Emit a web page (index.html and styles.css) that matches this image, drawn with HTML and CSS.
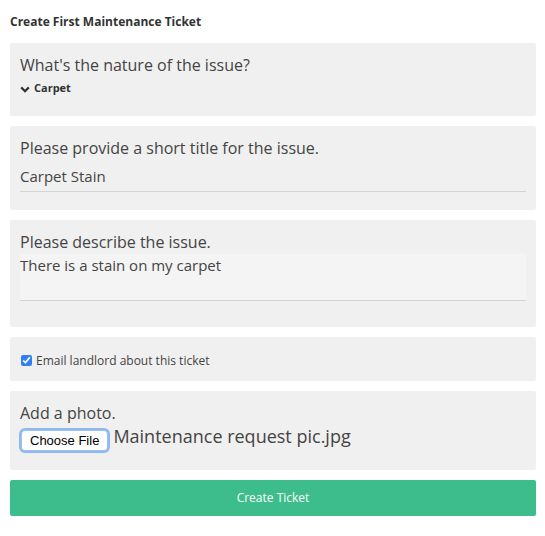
FILE: index.html
```
<!DOCTYPE html>
<html>
<head>
<meta charset="utf-8">
<link rel="stylesheet" href="styles.css">
</head>
<body>
<div class="page">
  <h1 class="heading">Create First Maintenance Ticket</h1>
  <div class="card card-nature">
    <div class="label">What's the nature of the issue?</div>
    <div class="select">
      <svg class="chev" width="10" height="7" viewBox="0 0 10 7"><path d="M1.2 1.4 L5 5.2 L8.8 1.4" fill="none" stroke="#333" stroke-width="2.2"/></svg>
      <span>Carpet</span>
    </div>
  </div>
  <div class="card card-title">
    <div class="label">Please provide a short title for the issue.</div>
    <div class="input">Carpet Stain</div>
  </div>
  <div class="card card-desc">
    <div class="label">Please describe the issue.</div>
    <div class="textarea">There is a stain on my carpet</div>
  </div>
  <div class="card card-check">
    <label class="check"><input type="checkbox" checked><span>Email landlord about this ticket</span></label>
  </div>
  <div class="card card-photo">
    <div class="label">Add a photo.</div>
    <div class="file">
      <span class="file-btn">Choose File</span>
      <span class="file-name">Maintenance request pic.jpg</span>
    </div>
  </div>
  <div class="submit">Create Ticket</div>
</div>
</body>
</html>
```
FILE: styles.css
```
html, body {
  margin: 0;
  padding: 0;
  background: #fff;
}
body {
  font-family: "Open Sans", "Liberation Sans", sans-serif;
  color: #444;
}
.page {
  width: 526px;
  padding: 10px 0 0 10px;
}
.heading {
  font-size: 12px;
  font-weight: 700;
  color: #333;
  margin: 0 0 10px 0;
  line-height: 23px;
}
.card {
  background: #f0f0f0;
  border-radius: 2px;
  padding: 10px;
  margin-bottom: 10px;
  box-sizing: border-box;
}
.label {
  font-size: 16px;
  line-height: 22px;
  color: #444;
}
.card-nature {
  height: 73px;
  padding-top: 11px;
}
.select {
  display: flex;
  align-items: center;
  gap: 4px;
  font-size: 11px;
  font-weight: 700;
  color: #333;
  line-height: 14px;
  margin-top: 5px;
}
.chev {
  margin-top: 2px;
}
.card-title {
  height: 84px;
  padding-top: 11px;
}
.input {
  margin-top: 3px;
  font-size: 15px;
  line-height: 29px;
  border-bottom: 1px solid #d4d4d4;
  color: #444;
}
.card-desc {
  height: 107px;
  padding-top: 11px;
}
.textarea {
  margin-top: 1px;
  height: 46px;
  background: #f4f4f4;
  border-bottom: 1px solid #d4d4d4;
  font-size: 15px;
  line-height: 22px;
  color: #444;
}
.card-check {
  height: 44px;
  display: flex;
  align-items: center;
  padding-top: 12px;
}
.check {
  display: flex;
  align-items: center;
  font-size: 12px;
  color: #444;
}
.check input {
  margin: 0 4px 0 1px;
  width: 11px;
  height: 11px;
  accent-color: #2f80f6;
}
.card-photo {
  height: 79px;
  padding-top: 11px;
}
.file {
  display: flex;
  align-items: flex-start;
  margin-top: 1px;
}
.file-btn {
  font-family: "Liberation Sans", Arial, sans-serif;
  font-size: 13px;
  color: #000;
  background: #fff;
  border: 1px solid #9cc2f3;
  border-radius: 4px;
  box-shadow: 0 0 0 2px #8fb8ef;
  padding: 2px 8px;
  line-height: 15px;
  margin: 5px 5px 0 1px;
}
.file-name {
  font-size: 18px;
  line-height: 22px;
  color: #444;
}
.submit {
  background: #3dbd8c;
  color: #fff;
  border-radius: 2px;
  height: 36px;
  line-height: 36px;
  text-align: center;
  font-size: 12px;
}
```
